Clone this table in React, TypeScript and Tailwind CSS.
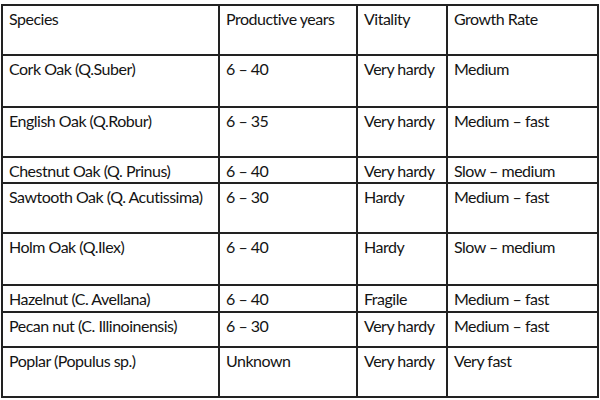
const rows: { h: string; cells: string[] }[] = [
  { h: 'h-[50px]', cells: ['Species', 'Productive years', 'Vitality', 'Growth Rate'] },
  { h: 'h-[52px]', cells: ['Cork Oak (Q.Suber)', '6 – 40', 'Very hardy', 'Medium'] },
  { h: 'h-[50px]', cells: ['English Oak (Q.Robur)', '6 – 35', 'Very hardy', 'Medium – fast'] },
  { h: 'h-[26px]', cells: ['Chestnut Oak (Q. Prinus)', '6 – 40', 'Very hardy', 'Slow – medium'] },
  { h: 'h-[50px]', cells: ['Sawtooth Oak (Q. Acutissima)', '6 – 30', 'Hardy', 'Medium – fast'] },
  { h: 'h-[52px]', cells: ['Holm Oak (Q.Ilex)', '6 – 40', 'Hardy', 'Slow – medium'] },
  { h: 'h-[27px]', cells: ['Hazelnut (C. Avellana)', '6 – 40', 'Fragile', 'Medium – fast'] },
  { h: 'h-[35px]', cells: ['Pecan nut (C. Illinoinensis)', '6 – 30', 'Very hardy', 'Medium – fast'] },
  { h: 'h-[50px]', cells: ['Poplar (Populus sp.)', 'Unknown', 'Very hardy', 'Very fast'] },
];

const colWidths = ['w-[217px]', 'w-[138px]', 'w-[90px]', 'w-[151px]'];

export default function App() {
  return (
    <div className="w-[600px] h-[400px] bg-white pl-[1px] pt-[4px] font-['Lato',sans-serif] text-[16px] leading-[20px] tracking-[-0.5px] text-[#141414]">
      <div className="w-fit border-l-2 border-t-2 border-[#222]">
        {rows.map((row, i) => (
          <div key={i} className={`flex ${row.h}`}>
            {row.cells.map((c, j) => (
              <div
                key={j}
                className={`${colWidths[j]} shrink-0 border-r-2 border-b-2 border-[#222] pl-[6px] pt-[3px] whitespace-nowrap overflow-hidden`}
              >
                {c}
              </div>
            ))}
          </div>
        ))}
      </div>
    </div>
  );
}
